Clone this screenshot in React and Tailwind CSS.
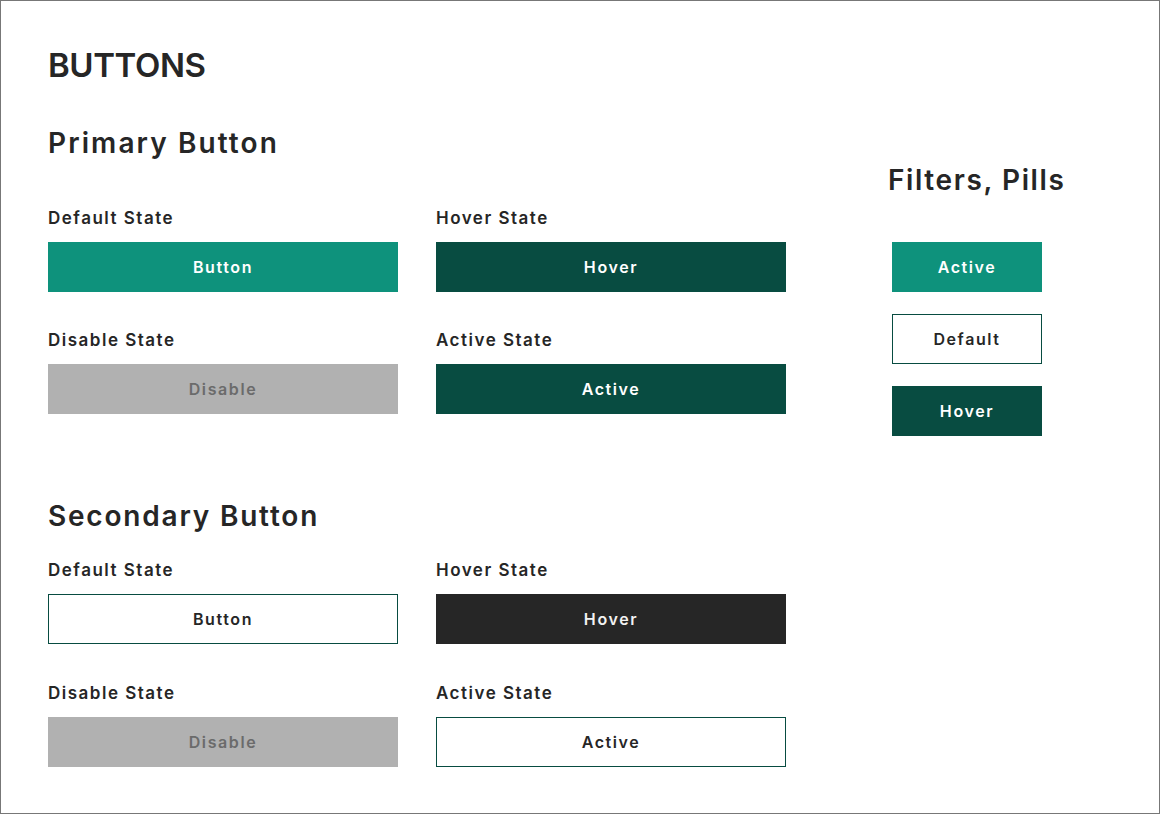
const font = { fontFamily: "Inter, 'Open Sans', sans-serif" };

function Label({ children }) {
  return (
    <div className="text-[17px] leading-[20px] font-semibold tracking-[1.5px] text-[#262626]">
      {children}
    </div>
  );
}

function Btn({ children, variant }) {
  const styles = {
    teal: "bg-[#0e927c] text-white",
    dark: "bg-[#084c41] text-white",
    black: "bg-[#262626] text-[#f2f2f2]",
    disabled: "bg-[#b1b1b1] text-[#6b6b6b]",
    outline: "bg-white border border-[#084c41] text-[#262626]",
  };
  return (
    <div
      className={`flex h-[50px] items-center justify-center text-[16px] font-semibold tracking-[1.6px] ${styles[variant]}`}
    >
      {children}
    </div>
  );
}

function Cell({ label, text, variant, top }) {
  return (
    <div className={top}>
      <Label>{label}</Label>
      <div className="mt-[14px]">
        <Btn variant={variant}>{text}</Btn>
      </div>
    </div>
  );
}

export default function App() {
  return (
    <div
      className="box-border h-[814px] w-[1160px] border border-[#777] bg-white pl-[47px] pt-[44px] text-[#262626]"
      style={font}
    >
      <h1 className="text-[33px] leading-[40px] font-semibold tracking-[-0.4px]">BUTTONS</h1>

      <div className="flex">
        <div className="w-[738px]">
          <h2 className="mt-[42px] text-[28px] leading-[32px] font-semibold tracking-[2.1px]">
            Primary Button
          </h2>
          <div className="mt-[49px] grid grid-cols-[350px_350px] gap-x-[38px]">
            <Cell label="Default State" text="Button" variant="teal" />
            <Cell label="Hover State" text="Hover" variant="dark" />
            <Cell label="Disable State" text="Disable" variant="disabled" top="mt-[38px]" />
            <Cell label="Active State" text="Active" variant="dark" top="mt-[38px]" />
          </div>

          <h2 className="mt-[86px] text-[28px] leading-[32px] font-semibold tracking-[1.8px]">
            Secondary Button
          </h2>
          <div className="mt-[28px] grid grid-cols-[350px_350px] gap-x-[38px]">
            <Cell label="Default State" text="Button" variant="outline" />
            <Cell label="Hover State" text="Hover" variant="black" />
            <Cell label="Disable State" text="Disable" variant="disabled" top="mt-[39px]" />
            <Cell label="Active State" text="Active" variant="outline" top="mt-[39px]" />
          </div>
        </div>

        <div className="ml-[106px] flex flex-col">
          <h2 className="mt-[79px] -ml-[4px] whitespace-nowrap text-[28px] leading-[32px] font-semibold tracking-[1.6px]">
            Filters, Pills
          </h2>
          <div className="mt-[46px] flex w-[150px] flex-col gap-[22px]">
            <Btn variant="teal">Active</Btn>
            <Btn variant="outline">Default</Btn>
            <Btn variant="dark">Hover</Btn>
          </div>
        </div>
      </div>
    </div>
  );
}
